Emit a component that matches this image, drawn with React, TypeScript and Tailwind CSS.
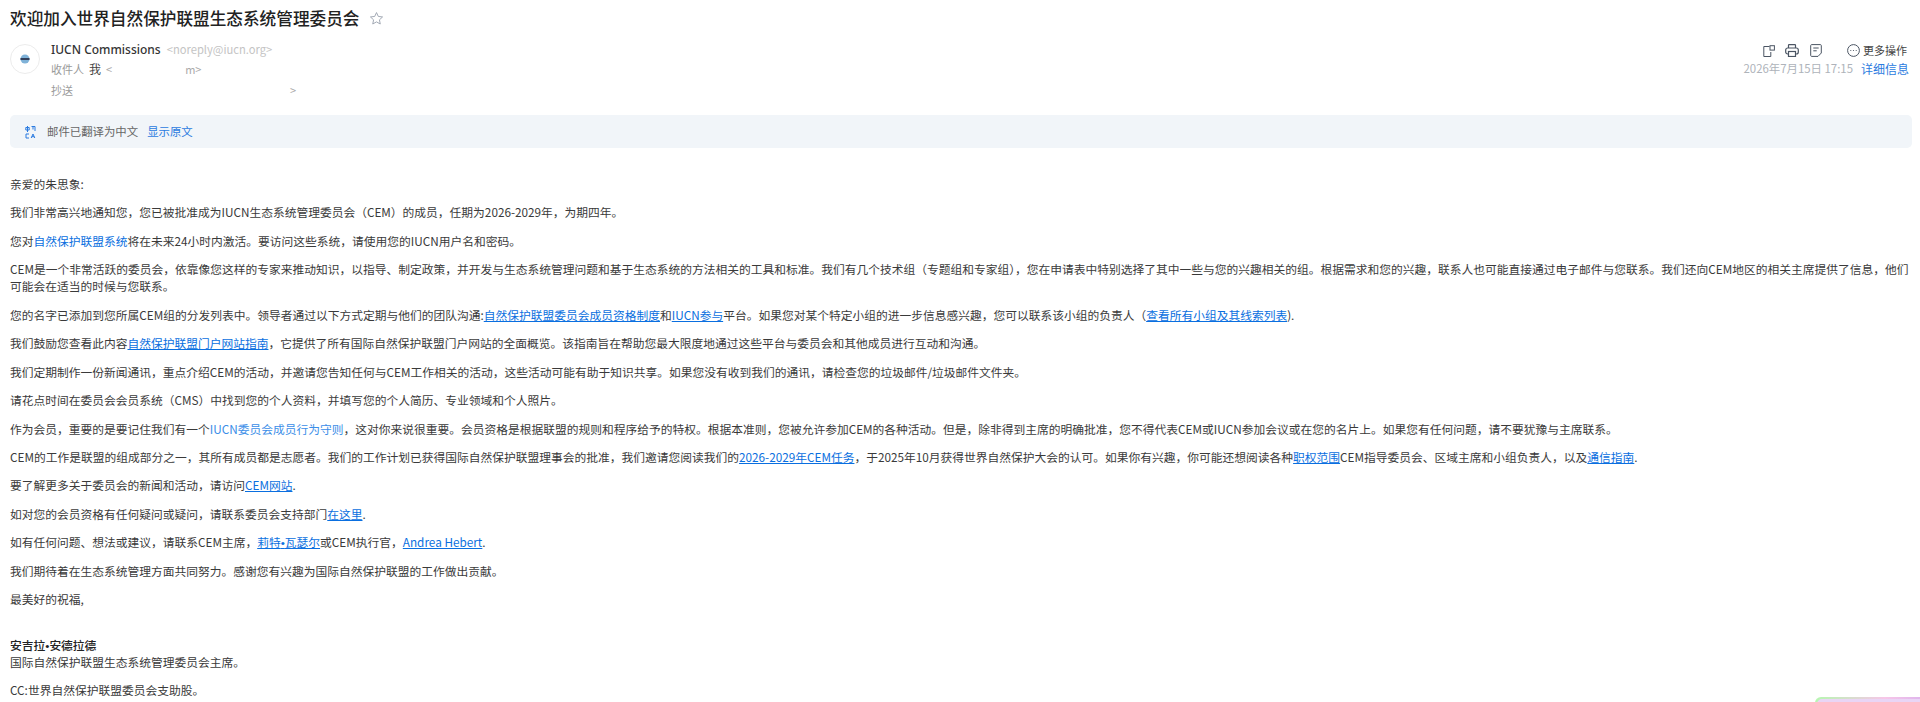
import { ReactNode } from "react";

const A = ({ children }: { children: ReactNode }) => (
  <a className="text-[#0a6fe0] underline underline-offset-1">{children}</a>
);

const P = ({ children }: { children: ReactNode }) => (
  <p className="mb-[11.45px] whitespace-nowrap">{children}</p>
);

const Dot = () => <span className="font-['Liberation_Sans',sans-serif] leading-none">•</span>;

const HeaderIcons = () => (
  <div className="flex items-center text-[#4b5563]">
    <svg width="12" height="12" viewBox="0 0 12 12" fill="none" stroke="currentColor" strokeWidth="1">
      <path d="M6.5 1.5H.8v10h7V7" />
      <rect x="7" y=".7" width="4.4" height="4.4" />
    </svg>
    <svg className="ml-[10px]" width="14" height="13" viewBox="0 0 14 13" fill="none" stroke="currentColor" strokeWidth="1.2">
      <path d="M3.5 4V1.2c0-.4.3-.6.6-.6h5.8c.3 0 .6.2.6.6V4" />
      <rect x=".7" y="4" width="12.6" height="6" rx="2" />
      <rect x="3.5" y="7.5" width="7" height="5" fill="#fff" />
    </svg>
    <svg className="ml-[11px]" width="12" height="13" viewBox="0 0 12 13" fill="none" stroke="currentColor" strokeWidth="1">
      <path d="M8 12.4H1.6c-.5 0-.9-.4-.9-.9V1.5c0-.5.4-.9.9-.9h8.8c.5 0 .9.4.9.9V9z" />
      <path d="M3.3 4h5.4M3.3 6.8h3.4" />
    </svg>
    <svg className="ml-[25px]" width="13" height="13" viewBox="0 0 13 13" fill="none" stroke="currentColor" strokeWidth="1">
      <circle cx="6.5" cy="6.5" r="5.9" />
      <circle cx="3.8" cy="6.5" r=".6" fill="currentColor" stroke="none" />
      <circle cx="6.5" cy="6.5" r=".6" fill="currentColor" stroke="none" />
      <circle cx="9.2" cy="6.5" r=".6" fill="currentColor" stroke="none" />
    </svg>
    <span className="ml-[3px] text-[11px] text-[#444] leading-none">更多操作</span>
  </div>
);

export default function App() {
  return (
    <div className="relative h-[702px] overflow-hidden bg-white font-['Noto_Sans_CJK_SC',sans-serif] text-[#3a3a3a]">
      <div className="pl-[10px] pr-2">
        <div className="flex items-center h-[36px]">
          <h1 className="text-[16.65px] font-medium text-[#222] leading-none">欢迎加入世界自然保护联盟生态系统管理委员会</h1>
          <svg className="ml-[10px]" width="15" height="15" viewBox="0 0 24 24" fill="none" stroke="#9ca3af" strokeWidth="1.5">
            <path d="M12 2.5l2.9 6.2 6.8.8-5 4.6 1.3 6.7-6-3.4-6 3.4 1.3-6.7-5-4.6 6.8-.8z" />
          </svg>
        </div>

        <div className="flex justify-between h-[79px]">
          <div className="flex">
            <div className="mt-[8px] flex h-[30px] w-[30px] items-center justify-center rounded-full border border-[#ececec]">
              <svg width="10" height="10" viewBox="0 0 10 10">
                <circle cx="5" cy="5" r="4.5" fill="#7fb2d8" />
                <rect x=".5" y="4" width="9" height="2" fill="#33415c" />
              </svg>
            </div>
            <div className="ml-[11px] pt-[7px]">
              <div className="flex items-center h-[14px]">
                <span className="text-[12px] font-medium text-[#333] font-['Noto_Sans',sans-serif] leading-none">IUCN Commissions</span>
                <span className="ml-[6px] text-[11.2px] text-[#c4c4c4] leading-none">&lt;noreply@iucn.org&gt;</span>
              </div>
              <div className="mt-[5px] flex items-center h-[14px] text-[11px] text-[#9a9a9a] leading-none">
                <span>收件人</span>
                <span className="ml-[5px] text-[12px] text-[#444]">我</span>
                <span className="ml-[5px] text-[#aaa]">&lt;</span>
                <span className="ml-[73px] text-[#aaa]">m&gt;</span>
              </div>
              <div className="mt-[7px] flex items-center h-[14px] text-[11px] text-[#9a9a9a] leading-none">
                <span>抄送</span>
                <span className="ml-[217px] text-[#aaa]">&gt;</span>
              </div>
            </div>
          </div>
          <div className="flex flex-col items-end pt-[8px]">
            <div className="mr-[5px]">
              <HeaderIcons />
            </div>
            <div className="mt-[6px] flex items-center leading-none">
              <span className="text-[11.4px] text-[#aeb3ba]">2026年7月15日 17:15</span>
              <span className="ml-[8px] mr-[3px] text-[12px] text-[#2b7be0]">详细信息</span>
            </div>
          </div>
        </div>

        <div className="flex h-[33px] items-center rounded-[5px] bg-[#f1f5f9] pl-[14px] text-[11.4px] leading-none">
          <svg width="13" height="14" viewBox="0 0 11 14" fill="none" stroke="#2b7be0" strokeWidth="1">
            <path d="M.8 2.5h3.4v2.5H.8zM2.5 1v6M6.5 1.5h3.5V6M8 1.5v3" />
            <path d="M4 9H1v4h3M6.2 13l1.8-4 1.8 4M6.9 11.7h2.2" />
          </svg>
          <span className="ml-[10px] text-[#666]">邮件已翻译为中文</span>
          <span className="ml-[9px] text-[#2b7be0]">显示原文</span>
        </div>

        <div className="mt-[27px] text-[11.76px] leading-[17px]">
          <P>亲爱的朱思象:</P>
          <P>我们非常高兴地通知您&#xFF0C;您已被批准成为IUCN生态系统管理委员会&#xFF08;CEM&#xFF09;的成员&#xFF0C;任期为2026-2029年&#xFF0C;为期四年。</P>
          <P>您对<span className="text-[#0a6fe0]">自然保护联盟系统</span>将在未来24小时内激活。要访问这些系统&#xFF0C;请使用您的IUCN用户名和密码。</P>
          <P>
            CEM是一个非常活跃的委员会&#xFF0C;依靠像您这样的专家来推动知识&#xFF0C;以指导、制定政策&#xFF0C;并开发与生态系统管理问题和基于生态系统的方法相关的工具和标准。我们有几个技术组&#xFF08;专题组和专家组&#xFF09;&#xFF0C;您在申请表中特别选择了其中一些与您的兴趣相关的组。根据需求和您的兴趣&#xFF0C;联系人也可能直接通过电子邮件与您联系。我们还向CEM地区的相关主席提供了信息&#xFF0C;他们
            <br />
            可能会在适当的时候与您联系。
          </P>
          <P>
            您的名字已添加到您所属CEM组的分发列表中。领导者通过以下方式定期与他们的团队沟通:<A>自然保护联盟委员会成员资格制度</A>和<A>IUCN参与</A>平台。如果您对某个特定小组的进一步信息感兴趣&#xFF0C;您可以联系该小组的负责人&#xFF08;<A>查看所有小组及其线索列表</A>).
          </P>
          <P>
            我们鼓励您查看此内容<A>自然保护联盟门户网站指南</A>&#xFF0C;它提供了所有国际自然保护联盟门户网站的全面概览。该指南旨在帮助您最大限度地通过这些平台与委员会和其他成员进行互动和沟通。
          </P>
          <P>我们定期制作一份新闻通讯&#xFF0C;重点介绍CEM的活动&#xFF0C;并邀请您告知任何与CEM工作相关的活动&#xFF0C;这些活动可能有助于知识共享。如果您没有收到我们的通讯&#xFF0C;请检查您的垃圾邮件/垃圾邮件文件夹。</P>
          <P>请花点时间在委员会会员系统&#xFF08;CMS&#xFF09;中找到您的个人资料&#xFF0C;并填写您的个人简历、专业领域和个人照片。</P>
          <P>
            作为会员&#xFF0C;重要的是要记住我们有一个<span className="text-[#3b8ee8]">IUCN委员会成员行为守则</span>&#xFF0C;这对你来说很重要。会员资格是根据联盟的规则和程序给予的特权。根据本准则&#xFF0C;您被允许参加CEM的各种活动。但是&#xFF0C;除非得到主席的明确批准&#xFF0C;您不得代表CEM或IUCN参加会议或在您的名片上。如果您有任何问题&#xFF0C;请不要犹豫与主席联系。
          </P>
          <P>
            CEM的工作是联盟的组成部分之一&#xFF0C;其所有成员都是志愿者。我们的工作计划已获得国际自然保护联盟理事会的批准&#xFF0C;我们邀请您阅读我们的<A>2026-2029年CEM任务</A>&#xFF0C;于2025年10月获得世界自然保护大会的认可。如果你有兴趣&#xFF0C;你可能还想阅读各种<A>职权范围</A>CEM指导委员会、区域主席和小组负责人&#xFF0C;以及<A>通信指南</A>.
          </P>
          <P>要了解更多关于委员会的新闻和活动&#xFF0C;请访问<A>CEM网站</A>.</P>
          <P>如对您的会员资格有任何疑问或疑问&#xFF0C;请联系委员会支持部门<A>在这里</A>.</P>
          <P>如有任何问题、想法或建议&#xFF0C;请联系CEM主席&#xFF0C;<A>莉特<Dot />瓦瑟尔</A>或CEM执行官&#xFF0C;<A>Andrea Hebert</A>.</P>
          <P>我们期待着在生态系统管理方面共同努力。感谢您有兴趣为国际自然保护联盟的工作做出贡献。</P>
          <P>最美好的祝福,</P>
          <div className="h-[17px]" />
          <p className="font-medium text-[#222]">安吉拉<Dot />安德拉德</p>
          <P>国际自然保护联盟生态系统管理委员会主席。</P>
          <P>CC:世界自然保护联盟委员会支助股。</P>
        </div>
      </div>

      {/* floating widget edge in the bottom right corner */}
      <div className="absolute left-[1815px] top-[697px] h-[40px] w-[140px] rounded-[6px] bg-[linear-gradient(90deg,#b6f7b0,#f7c6e8,#c9a6f0)] p-[2px]">
        <div className="h-full w-full rounded-[5px] bg-[#e9d5f5]" />
      </div>
    </div>
  );
}
